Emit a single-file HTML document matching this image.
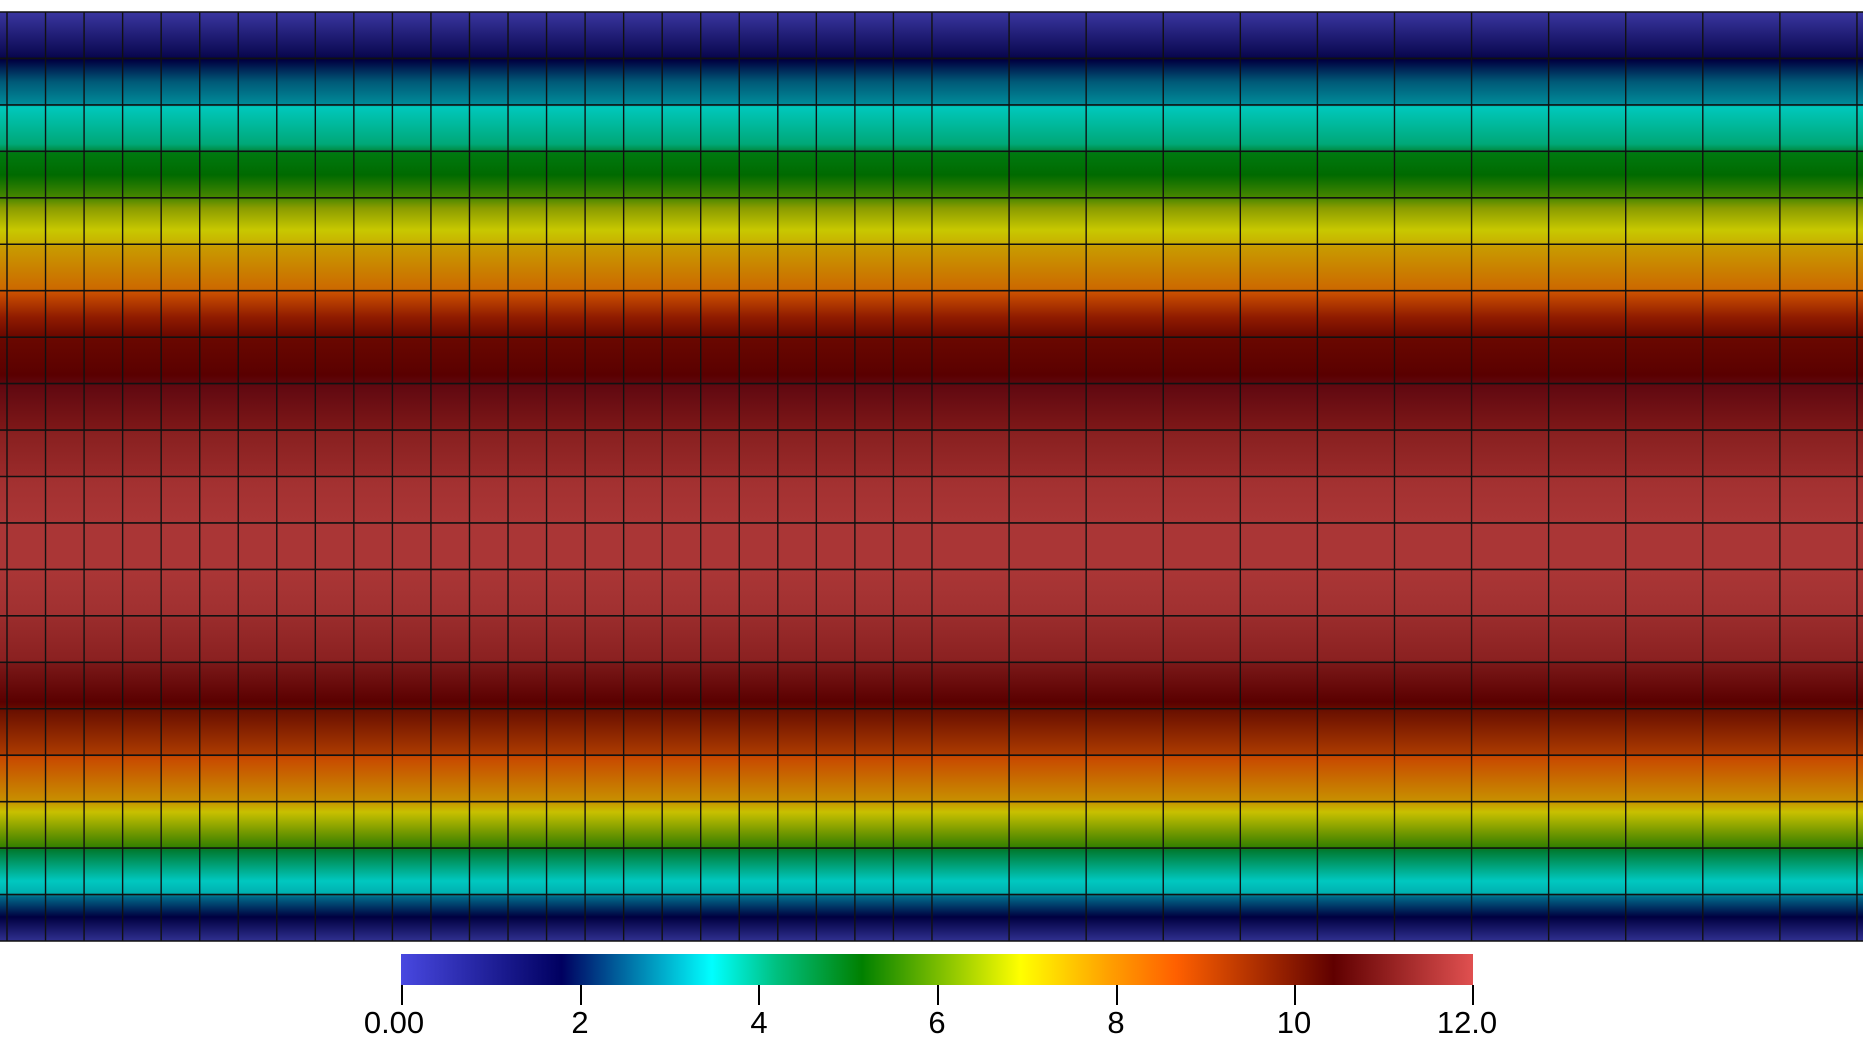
<!DOCTYPE html>
<html><head><meta charset="utf-8"><style>
html,body{margin:0;padding:0;background:#fff;width:1863px;height:1044px;overflow:hidden;position:relative}
#field{position:absolute;left:0;top:12px;width:1863px;height:929px;
background:linear-gradient(to bottom,
#3a36a0 0px,#0a0850 44px,#000040 48px,#005a78 70px,#008a98 92px,#00c8bc 95px,#00a878 132px,#008a40 139px,
#007a10 141px,#006a00 163px,#4a8800 186px,#8a9c00 196px,#c8c800 218px,#c8b000 232px,#c89c00 234px,#cc6800 278px,
#cc5000 280px,#901c00 305px,#6a0800 325px,#5a0000 363px,#600810 373px,#7e1818 418px,#882020 420px,#9a2a2a 464px,
#a23030 466px,#aa3636 510px,#aa3636 558px,#a03030 604px,#9a2c2c 606px,#8a2020 650px,#7a1818 652px,#5a0000 690px,
#6a1000 699px,#a83800 740px,#b03c00 743px,#c84800 745px,#c89000 789px,#c8c000 800px,#609000 825px,#308000 836px,
#007a30 838px,#00c8c0 869px,#00b0b0 881px,#006888 885px,#000040 905px,#303090 929px);}
svg{position:absolute;left:0;top:0}
#bar{position:absolute;left:401px;top:954px;width:1072px;height:31px;
background:linear-gradient(to right,#4848e0 0%,#000060 15%,#00ffff 29%,#00c080 35%,#008000 43%,#ffff00 57.8%,#ffa000 66%,#ff6000 72.3%,#600000 87%,#e05050 100%)}
.t{position:absolute;top:985px;width:1.5px;height:20px;background:#000}
.l{position:absolute;top:1005px;font-family:"Liberation Sans",sans-serif;font-size:31px;color:#000;transform:translateX(-50%);line-height:36px}
</style></head><body>
<div id="field"></div>
<svg width="1863" height="1044" id="grid"></svg>
<div id="bar"></div>
<div class="t" style="left:401px"></div><div class="t" style="left:580px"></div><div class="t" style="left:758px"></div>
<div class="t" style="left:937px"></div><div class="t" style="left:1116px"></div><div class="t" style="left:1294px"></div><div class="t" style="left:1472px"></div>
<div class="l" style="left:394px">0.00</div><div class="l" style="left:580px">2</div><div class="l" style="left:759px">4</div>
<div class="l" style="left:937px">6</div><div class="l" style="left:1116px">8</div><div class="l" style="left:1294px">10</div><div class="l" style="left:1467px">12.0</div>
<script>
var s=document.getElementById('grid'),h='';
for(var k=0;k<=20;k++){var y=12+46.45*k;h+='<line x1="0" x2="1863" y1="'+y+'" y2="'+y+'" stroke="#111" stroke-width="1.6"/>';}
var xs=[];for(var k=0;k<=24;k++)xs.push(7+38.54*k);for(var k=1;k<=12;k++)xs.push(932+77.08*k);
xs.forEach(function(x){h+='<line x1="'+x+'" x2="'+x+'" y1="12" y2="941" stroke="#111" stroke-width="1.4"/>';});
s.innerHTML=h;
</script>
</body></html>
